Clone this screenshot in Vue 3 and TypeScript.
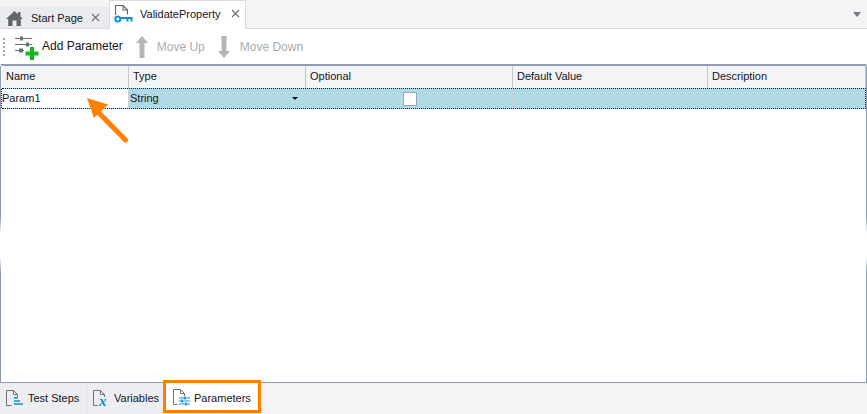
<script setup lang="ts">
interface Col { label: string; width: number }
const cols: Col[] = [
  { label: 'Name', width: 127 },
  { label: 'Type', width: 177 },
  { label: 'Optional', width: 207 },
  { label: 'Default Value', width: 195 },
  { label: 'Description', width: 158 }
]
</script>

<template>
  <div class="app">
    <div class="tabbar">
      <div class="tab inactive">
        <svg class="home" width="17" height="15" viewBox="0 0 17 15">
          <path d="M8.500 0 L12 3.200 V1 H14.500 V5.500 L17 8 H14.800 V15 H10.500 V9.500 H6.500 V15 H2.200 V8 H0 Z" fill="#63666c" />
        </svg>
        <span class="tab-label">Start Page</span>
        <svg class="close" width="9" height="9" viewBox="0 0 9 9"><path d="M1 1 L8 8 M8 1 L1 8" stroke="#70747a" stroke-width="1.200" /></svg>
      </div>
      <div class="tab active">
        <svg class="doc-key" width="20" height="19" viewBox="0 0 20 19">
          <path d="M1.500 10 V0.500 H9 L13.500 5 V9.500 M9 0.500 V5 H13.500" fill="none" stroke="#5f6368" stroke-width="1.100" />
          <circle cx="3.800" cy="14" r="2.500" fill="none" stroke="#0f8fd6" stroke-width="2" />
          <path d="M6.500 13 H17.500 V16.500 M13.500 13 V16.500" fill="none" stroke="#0f8fd6" stroke-width="2" />
        </svg>
        <span class="tab-label active-label">ValidateProperty</span>
        <svg class="close" width="9" height="9" viewBox="0 0 9 9"><path d="M1 1 L8 8 M8 1 L1 8" stroke="#70747a" stroke-width="1.200" /></svg>
      </div>
      <div class="tab-spacer"></div>
      <div class="tab-menu"></div>
    </div>

    <div class="toolbar">
      <div class="grip"><i></i><i></i><i></i><i></i><i></i></div>
      <button class="tool add">
        <svg width="26" height="26" viewBox="0 0 26 26">
          <path d="M1 3.500 H18 M1 9.500 H18 M1 15.500 H10" stroke="#6b6e73" stroke-width="1" />
          <rect x="6" y="1.500" width="3" height="4" fill="#6b6e73" />
          <rect x="12" y="7.500" width="3" height="4" fill="#6b6e73" />
          <rect x="5" y="13.500" width="4" height="4" fill="#6b6e73" />
          <path d="M18 12 V25 M11.500 18.500 H24.500" stroke="#10b81c" stroke-width="4" />
        </svg>
        <span>Add Parameter</span>
      </button>
      <button class="tool up">
        <svg width="12" height="24" viewBox="0 0 12 24"><path d="M6 1 L12 8 H8.500 V23 H3.500 V8 H0 Z" fill="#b3b5b7" /></svg>
        <span>Move Up</span>
      </button>
      <button class="tool down">
        <svg width="12" height="24" viewBox="0 0 12 24"><path d="M6 23 L12 16 H8.500 V1 H3.500 V16 H0 Z" fill="#b3b5b7" /></svg>
        <span>Move Down</span>
      </button>
    </div>

    <div class="grid">
      <div class="grid-head">
        <div v-for="c in cols" :key="c.label" class="hcell" :style="{ width: c.width + 'px' }">{{ c.label }}</div>
      </div>
      <div class="grid-row">
        <div class="cell name" :style="{ width: cols[0].width + 'px' }">Param1</div>
        <div class="cell type" :style="{ width: cols[1].width + 'px' }">
          <span>String</span><i class="caret"></i>
        </div>
        <div class="cell optional" :style="{ width: cols[2].width + 'px' }"><i class="check"></i></div>
        <div class="cell" :style="{ width: cols[3].width + 'px' }"></div>
        <div class="cell last"></div>
      </div>
    </div>

    <div class="bottombar">
      <div class="btab first">
        <svg width="19" height="19" viewBox="0 0 19 19">
          <path d="M6.500 16.500 H1.500 V1.500 H8.500 L12.500 5.500 V8 M8.500 1.500 V5.500 H12.500" fill="none" stroke="#6f7378" />
          <path d="M9 9 H13 M9 12 H15 M9 15 H18" stroke="#0f8fd6" stroke-width="1.600" />
        </svg>
        <span>Test Steps</span>
      </div>
      <div class="btab second">
        <svg width="20" height="24" viewBox="0 0 20 24">
          <path d="M5.500 16.500 H1.500 V1.500 H8.500 L12.500 5.500 V8 M8.500 1.500 V5.500 H12.500" fill="none" stroke="#6f7378" />
          <text x="7" y="17" class="x-glyph">x</text>
        </svg>
        <span>Variables</span>
      </div>
      <div class="btab third">
        <svg width="19" height="19" viewBox="0 0 19 19">
          <path d="M5.500 16.500 H1.500 V1.500 H8.500 L12.500 5.500 V8 M8.500 1.500 V5.500 H12.500" fill="none" stroke="#6f7378" />
          <path d="M7 10 H18 M7 13 H18 M7 16 H18" stroke="#0f8fd6" stroke-width="1" />
          <path d="M13 8.500 V11.500 M10 11.500 V14.500 M14 14.500 V17.500" stroke="#0f8fd6" stroke-width="1.600" />
        </svg>
        <span>Parameters</span>
      </div>
    </div>

    <svg class="arrow" width="46" height="48" viewBox="0 0 46 48">
      <path d="M39.500 43 L9 12" stroke="#ff8000" stroke-width="5" stroke-linecap="round" />
      <path d="M1 1 L22 7.500 L8 21 Z" fill="#ff8000" />
    </svg>
  </div>
</template>

<style scoped>
.app {
  position: relative;
  width: 867px;
  height: 414px;
  display: flex;
  flex-direction: column;
  overflow: hidden;
  background: #fff;
  font-family: "Liberation Sans", Arial, sans-serif;
  font-size: 11px;
  color: #14141c;
}
.tabbar {
  height: 29px;
  flex: none;
  display: flex;
  box-sizing: border-box;
  background: #f3f4f6;
  border-bottom: 1px solid #d8dce1;
  align-items: flex-end;
}
.tab {
  display: flex;
  align-items: center;
  box-sizing: border-box;
}
.inactive {
  width: 109px;
  height: 21px;
  padding-left: 6px;
  background: #e9ebef;
}
.active {
  width: 137px;
  height: 29px;
  margin-bottom: -1px;
  padding-left: 4px;
  background: #fff;
  border: 1px solid #d8dce1;
  border-bottom: 0;
}
.home { margin-right: 8px; margin-top: 2px; }
.tab-label { white-space: nowrap; }
.inactive .tab-label { width: 64px; margin-top: 1px; }
.inactive .close { margin-left: -4px; }
.doc-key { margin-top: -2px; margin-right: 6px; }
.active-label { width: 92px; margin-top: -3px; }
.active .close { margin-top: -3px; margin-left: -1px; }
.tab-spacer { flex: 1; }
.tab-menu {
  width: 0;
  height: 0;
  margin: 0 6px 11px 0;
  border-left: 4.500px solid transparent;
  border-right: 4.500px solid transparent;
  border-top: 5px solid #74777d;
}
.toolbar {
  height: 35px;
  flex: none;
  display: flex;
  align-items: center;
  padding-left: 3px;
  box-sizing: border-box;
  font-size: 12px;
}
.grip {
  display: flex;
  flex-direction: column;
  gap: 2px;
  width: 2px;
  margin-right: 9px;
}
.grip i { display: block; width: 2px; height: 2px; background: #a3a5a8; }
.tool {
  display: flex;
  align-items: center;
  padding: 0;
  border: 0;
  background: none;
  font: inherit;
  color: inherit;
}
.add svg { margin-right: 2px; margin-top: 2px; }
.add span { margin-top: -1px; }
.up { margin-left: 13px; color: #a9abae; }
.up svg { margin-right: 9px; }
.down { margin-left: 13px; color: #a9abae; }
.down svg { margin-right: 10px; }
.grid {
  flex: 1;
  min-height: 0;
  box-sizing: border-box;
  border-top: 2px solid #909db0;
  border-bottom: 1px solid #909db0;
  border-left: 2px solid transparent;
  border-right: 1px solid transparent;
  background:
    linear-gradient(#8c9bb0 0, #8c9bb0 153px, #fff 169px, #fff 193px, #8c9bb0 209px) left / 1px 100% no-repeat,
    linear-gradient(#8c9bb0 0, #8c9bb0 153px, #fff 169px, #fff 193px, #8c9bb0 209px) right / 1px 100% no-repeat;
  background-origin: border-box;
  background-clip: border-box;
}
.grid-head {
  height: 22px;
  display: flex;
  box-sizing: border-box;
  background: #f3f4f6;
}
.hcell {
  flex: none;
  box-sizing: border-box;
  padding: 4px 0 0 4px;
  border-right: 1px solid #c4c6ca;
  white-space: nowrap;
}
.grid-row {
  height: 21px;
  display: flex;
  box-sizing: border-box;
  background: #b0dbe4;
  border-top: 1px dotted #222;
  border-bottom: 1px dotted #222;
  border-right: 1px dotted #222;
}
.cell {
  flex: none;
  box-sizing: border-box;
  border-right: 1px solid #c8d3d8;
  padding-left: 1px;
  line-height: 19px;
  position: relative;
  white-space: nowrap;
}
.cell.name {
  background: #fff;
  padding-left: 0;
  border-left: 1px dotted #222;
  margin-left: -1px;
  width: 128px !important;
}
.cell.last { flex: 1; border-right: 0; }
.caret {
  position: absolute;
  right: 7px;
  top: 8px;
  width: 0;
  height: 0;
  border-left: 3px solid transparent;
  border-right: 3px solid transparent;
  border-top: 3px solid #111;
}
.optional { display: flex; align-items: center; justify-content: center; }
.check {
  display: block;
  width: 14px;
  height: 14px;
  box-sizing: border-box;
  background: #fff;
  border: 1px solid #9aa7b8;
}
.bottombar {
  height: 31px;
  flex: none;
  display: flex;
  background: #f3f4f6;
  align-items: flex-start;
}
.btab {
  display: flex;
  align-items: center;
  box-sizing: border-box;
  white-space: nowrap;
  height: 31px;
}
.first { width: 87px; padding-left: 5px; background: #eceef1; border-right: 1px solid #dfe1e5; }
.first svg { margin-right: 4px; }
.second { width: 76px; padding-left: 5px; background: #eceef1; }
.second svg { margin-right: 2px; margin-top: 5px; }
.third {
  position: relative;
  width: 98px;
  height: 33px;
  margin-top: -3px;
  padding-left: 6px;
  background: #fff;
  border: 3px solid #ff8000;
}
.third svg { margin-right: 3px; margin-top: 2px; }
.third span { margin-top: 3px; }
.first span, .second span { margin-top: -1px; }
.x-glyph {
  font-family: "Liberation Serif", serif;
  font-style: italic;
  font-weight: 700;
  font-size: 15px;
  fill: #0f8fd6;
}
.arrow {
  position: absolute;
  left: 86px;
  top: 97px;
}
</style>
